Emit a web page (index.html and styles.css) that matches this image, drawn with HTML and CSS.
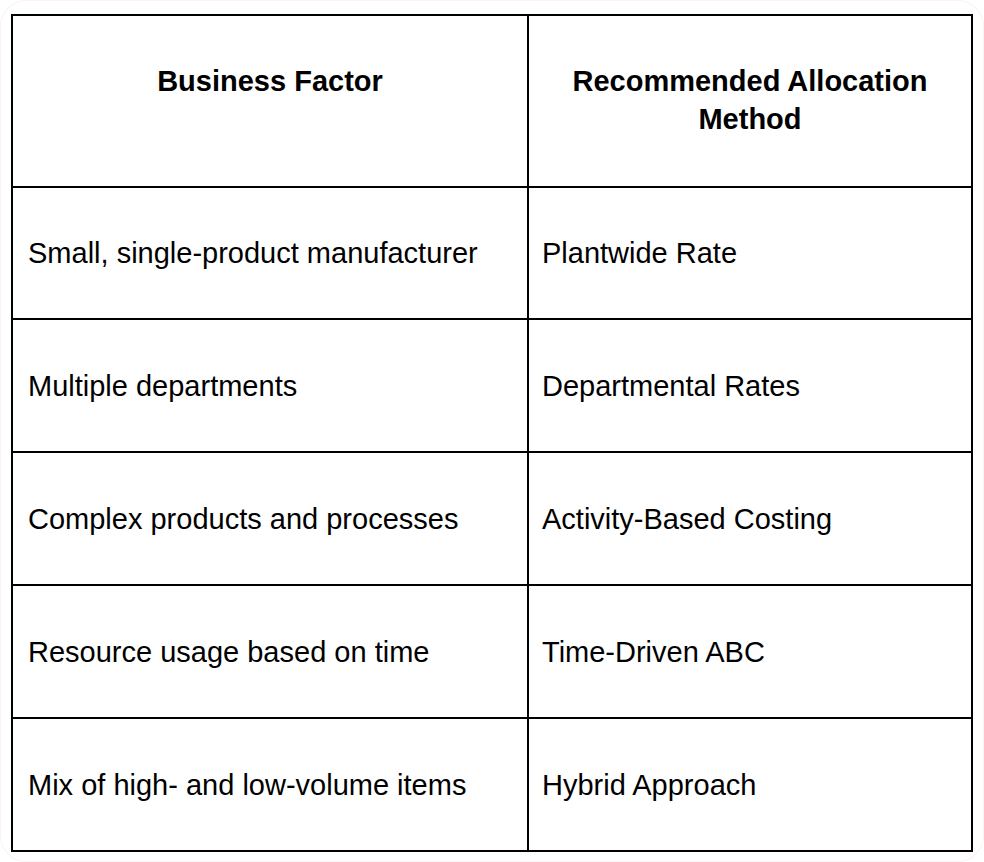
FILE: index.html
```html
<!DOCTYPE html>
<html lang="en">
<head>
<meta charset="utf-8">
<title>Allocation Methods</title>
<link rel="stylesheet" href="styles.css">
</head>
<body>
<div class="frame">
  <table class="alloc">
    <colgroup>
      <col class="c1">
      <col class="c2">
    </colgroup>
    <thead>
      <tr class="head">
        <th>Business Factor</th>
        <th>Recommended Allocation Method</th>
      </tr>
    </thead>
    <tbody>
      <tr><td>Small, single-product manufacturer</td><td>Plantwide Rate</td></tr>
      <tr><td>Multiple departments</td><td>Departmental Rates</td></tr>
      <tr><td>Complex products and processes</td><td>Activity-Based Costing</td></tr>
      <tr><td>Resource usage based on time</td><td>Time-Driven ABC</td></tr>
      <tr><td>Mix of high- and low-volume items</td><td>Hybrid Approach</td></tr>
    </tbody>
  </table>
</div>
</body>
</html>
```

FILE: styles.css
```css
html, body {
  margin: 0;
  padding: 0;
  background: #fff;
}
.frame {
  width: 984px;
  height: 862px;
  box-sizing: border-box;
  padding: 14px 0 0 11px;
  border-radius: 26px;
  box-shadow: inset 0 0 0 1px #fdf1f1;
}
.alloc {
  border-collapse: collapse;
  width: 962px;
  table-layout: fixed;
  font-family: "Liberation Sans", Arial, sans-serif;
  font-size: 29px;
  color: #000;
}
.c1 { width: 516px; }
.alloc th, .alloc td {
  border: 2px solid #000;
  vertical-align: middle;
}
.alloc th {
  font-weight: bold;
  text-align: center;
  line-height: 38px;
  height: 172px;
  vertical-align: top;
  padding: 46px 30px 0;
  box-sizing: border-box;
}
.alloc td {
  text-align: left;
  height: 131px;
  line-height: 32px;
  padding: 0 14px 0 15px;
}
.alloc tbody tr:first-child td {
  height: 130px;
}
.alloc td + td {
  padding-left: 13px;
}
```
